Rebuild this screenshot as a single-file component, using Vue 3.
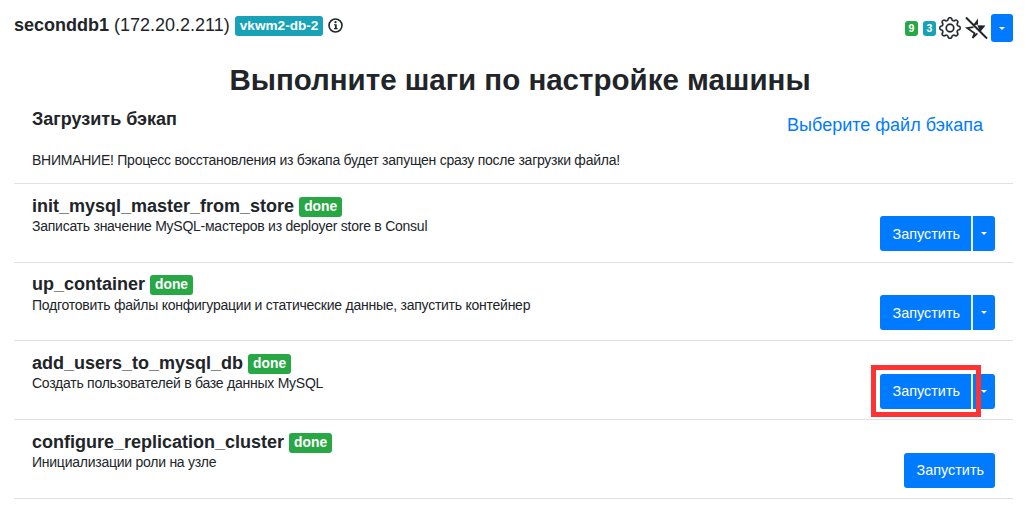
<script setup>
const steps = [
  { name: 'init_mysql_master_from_store', desc: 'Записать значение MySQL-мастеров из deployer store в Consul', split: true },
  { name: 'up_container', desc: 'Подготовить файлы конфигурации и статические данные, запустить контейнер', split: true },
  { name: 'add_users_to_mysql_db', desc: 'Создать пользователей в базе данных MySQL', split: true, marked: true },
  { name: 'configure_replication_cluster', desc: 'Инициализации роли на узле', split: false },
]
</script>

<template>
  <div class="page">
    <header class="top">
      <div class="host">
        <b>seconddb1</b>
        <span class="ip">(172.20.2.211)</span>
        <span class="tag">vkwm2-db-2</span>
        <svg class="info" width="15" height="15" viewBox="0 0 16 16" fill="#212529">
          <circle cx="8" cy="8" r="6.9" fill="none" stroke="#212529" stroke-width="1.7" />
          <path d="M9.3 6.6H6.4v1.2h1v2.9h-1v1.2h3.9v-1.2h-1z" />
          <circle cx="8" cy="4.5" r="1.2" />
        </svg>
      </div>
      <div class="tools">
        <span class="mini green">9</span>
        <span class="mini teal">3</span>
        <svg class="gear" width="22" height="22" viewBox="0 0 16 16" fill="#212529" stroke="#212529" stroke-width="0.2">
          <path d="M8 4.754a3.246 3.246 0 1 0 0 6.492 3.246 3.246 0 0 0 0-6.492zM5.754 8a2.246 2.246 0 1 1 4.492 0 2.246 2.246 0 0 1-4.492 0z" />
          <path d="M9.796 1.343c-.527-1.79-3.065-1.79-3.592 0l-.094.319a.873.873 0 0 1-1.255.52l-.292-.16c-1.64-.892-3.433.902-2.54 2.541l.159.292a.873.873 0 0 1-.52 1.255l-.319.094c-1.79.527-1.79 3.065 0 3.592l.319.094a.873.873 0 0 1 .52 1.255l-.16.292c-.892 1.64.901 3.434 2.541 2.54l.292-.159a.873.873 0 0 1 1.255.52l.094.319c.527 1.79 3.065 1.79 3.592 0l.094-.319a.873.873 0 0 1 1.255-.52l.292.16c1.64.893 3.434-.902 2.54-2.541l-.159-.292a.873.873 0 0 1 .52-1.255l.319-.094c1.79-.527 1.79-3.065 0-3.592l-.319-.094a.873.873 0 0 1-.52-1.255l.16-.292c.893-1.64-.902-3.433-2.541-2.54l-.292.159a.873.873 0 0 1-1.255-.52l-.094-.319zm-2.633.283c.246-.835 1.428-.835 1.674 0l.094.319a1.873 1.873 0 0 0 2.693 1.115l.291-.16c.764-.415 1.6.42 1.184 1.185l-.159.292a1.873 1.873 0 0 0 1.116 2.692l.318.094c.835.246.835 1.428 0 1.674l-.319.094a1.873 1.873 0 0 0-1.115 2.693l.16.291c.415.764-.42 1.6-1.185 1.184l-.291-.159a1.873 1.873 0 0 0-2.693 1.116l-.094.318c-.246.835-1.428.835-1.674 0l-.094-.319a1.873 1.873 0 0 0-2.692-1.115l-.292.16c-.764.415-1.6-.42-1.184-1.185l.159-.291A1.873 1.873 0 0 0 1.945 8.93l-.319-.094c-.835-.246-.835-1.428 0-1.674l.319-.094A1.873 1.873 0 0 0 3.06 4.377l-.16-.292c-.415-.764.42-1.6 1.185-1.184l.292.159a1.873 1.873 0 0 0 2.692-1.115l.094-.319z" />
        </svg>
        <svg class="bolt" width="24" height="24" viewBox="0 0 24 24">
          <path d="M2 1.5L23 22.5" fill="none" stroke="#212529" stroke-width="2" />
          <path d="M14 2.5L8.8 9.5L14 8.6z" fill="#212529" />
          <path d="M13.4 9.2L21.5 9.4L16.2 16z" fill="#212529" />
          <path d="M9.5 11.2L3.2 12L10.6 17.2L8.6 22L13.4 17.4" fill="none" stroke="#212529" stroke-width="1.7" />
        </svg>
        <button class="caret-only" type="button"><i class="caret"></i></button>
      </div>
    </header>

    <h1 class="title">Выполните шаги по настройке машины</h1>

    <section class="backup">
      <div class="backup-head">
        <h2>Загрузить бэкап</h2>
        <a class="file">Выберите файл бэкапа</a>
      </div>
      <p>ВНИМАНИЕ! Процесс восстановления из бэкапа будет запущен сразу после загрузки файла!</p>
    </section>

    <section v-for="s in steps" :key="s.name" class="step">
      <div class="step-text">
        <div class="step-name"><b>{{ s.name }}</b> <span class="done">done</span></div>
        <div class="step-desc">{{ s.desc }}</div>
      </div>
      <div class="actions">
        <div v-if="s.split" class="split">
          <button class="run" type="button">Запустить</button>
          <button class="more" type="button"><i class="caret"></i></button>
        </div>
        <button v-else class="run single" type="button">Запустить</button>
        <span v-if="s.marked" class="marker"></span>
      </div>
    </section>
  </div>
</template>

<style>
html, body { margin: 0; background: #fff; }
</style>

<style scoped>
.page {
  width: 999px;
  margin-left: 14px;
  font-family: "Liberation Sans", Arial, sans-serif;
  color: #212529;
  font-size: 14px;
}
.top {
  display: flex;
  justify-content: space-between;
  height: 60px;
  padding-top: 14px;
  box-sizing: border-box;
}
.host {
  display: flex;
  align-items: center;
  height: 23px;
  font-size: 18px;
  gap: 5px;
}
.tag {
  background: #17a2b8;
  color: #fff;
  font-weight: 700;
  font-size: 13.6px;
  border-radius: 3px;
  padding: 0 5px;
  height: 20px;
  line-height: 20px;
}
.tools {
  display: flex;
  align-items: center;
  height: 28px;
}
.mini {
  width: 13px;
  height: 15px;
  border-radius: 3px;
  color: #fff;
  font-size: 10.5px;
  font-weight: 700;
  line-height: 15px;
  text-align: center;
  margin-right: 5px;
  margin-top: 1px;
}
.green { background: #28a745; }
.teal { background: #17a2b8; margin-right: 3px; }
.bolt { margin-left: 3px; }
.caret-only {
  width: 22px;
  height: 28px;
  margin-left: 3px;
  padding: 0;
  border: 0;
  border-radius: 3px;
  background: #007bff;
  display: flex;
  align-items: center;
  justify-content: center;
}
.caret {
  display: block;
  width: 0;
  height: 0;
  border-top: 3.5px solid #fff;
  border-left: 3.5px solid transparent;
  border-right: 3.5px solid transparent;
}
.title {
  margin: 0;
  padding-left: 13px;
  height: 40px;
  font-size: 29.5px;
  font-weight: 700;
  line-height: 40px;
  text-align: center;
}
.backup {
  height: 83px;
  padding: 0 18px;
  border-bottom: 1px solid #dee2e6;
}
.backup-head {
  display: flex;
  justify-content: space-between;
  height: 43px;
}
.backup h2 {
  margin: 9px 0 0;
  font-size: 18px;
  font-weight: 700;
  line-height: 20px;
}
.file {
  color: #007bff;
  font-size: 18px;
  line-height: 24px;
  margin-top: 13px;
  margin-right: 12px;
}
.backup p {
  margin: 7px 0 0;
  font-size: 14px;
  letter-spacing: -0.25px;
  line-height: 20px;
}
.step {
  display: flex;
  justify-content: space-between;
  height: 77.7px;
  padding: 0 18px;
  border-bottom: 1px solid #dee2e6;
}
.step-name {
  margin-top: 9.6px;
  font-size: 18px;
  line-height: 24px;
}
.done {
  display: inline-block;
  background: #28a745;
  color: #fff;
  font-size: 13.8px;
  font-weight: 700;
  border-radius: 3px;
  padding: 0 5px;
  line-height: 20px;
  vertical-align: 1px;
}
.step-desc {
  font-size: 14px;
  letter-spacing: -0.25px;
  line-height: 20px;
  margin-top: -1.6px;
}
.actions {
  position: relative;
  align-self: flex-start;
  margin-top: 32.45px;
}
.split { display: flex; }
.run {
  height: 35px;
  border: 0;
  background: #007bff;
  color: #fff;
  font: 14.4px "Liberation Sans", Arial, sans-serif;
  padding: 0 11px 0 13px;
  border-radius: 3px 0 0 3px;
}
.run.single { border-radius: 3px; }
.more {
  width: 24px;
  height: 35px;
  border: 0;
  border-left: 2px solid #e6f1ff;
  background: #007bff;
  border-radius: 0 3px 3px 0;
  padding: 0;
  display: flex;
  align-items: center;
  justify-content: center;
}
.marker {
  position: absolute;
  left: -9px;
  top: -9px;
  width: 110px;
  height: 52px;
  border: 5px solid #ff3333;
  box-sizing: border-box;
}
</style>
